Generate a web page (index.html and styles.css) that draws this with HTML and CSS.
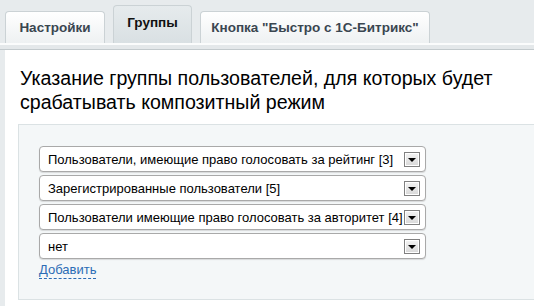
FILE: index.html
```html
<!DOCTYPE html>
<html lang="ru">
<head>
<meta charset="utf-8">
<link rel="stylesheet" href="styles.css">
</head>
<body>
<div class="tabs">
  <div class="tab tab-settings">Настройки</div>
  <div class="tab tab-groups active">Группы</div>
  <div class="tab tab-button">Кнопка "Быстро с 1С-Битрикс"</div>
</div>
<div class="tab-sep"></div>
<div class="panel">
  <h1 class="title">Указание группы пользователей, для которых будет срабатывать композитный режим</h1>
  <div class="box">
    <div class="select"><span class="val">Пользователи, имеющие право голосовать за рейтинг [3]</span><span class="btn"></span></div>
    <div class="select"><span class="val">Зарегистрированные пользователи [5]</span><span class="btn"></span></div>
    <div class="select"><span class="val">Пользователи имеющие право голосовать за авторитет [4]</span><span class="btn"></span></div>
    <div class="select"><span class="val">нет</span><span class="btn"></span></div>
    <a class="add" href="#">Добавить</a>
  </div>
</div>
</body>
</html>
```
FILE: styles.css
```css
html, body {
  margin: 0;
  padding: 0;
}
body {
  background: #e7ebed;
  font-family: "Liberation Sans", Arial, sans-serif;
  width: 534px;
  height: 306px;
  overflow: hidden;
}
.tabs {
  display: flex;
  align-items: flex-end;
  gap: 8px;
  padding: 5px 0 0 5px;
  height: 43px;
  box-sizing: border-box;
}
.tab {
  height: 32px;
  box-sizing: border-box;
  display: flex;
  align-items: center;
  justify-content: center;
  font-size: 13.5px;
  font-weight: bold;
  color: #3a4650;
  background: linear-gradient(#ffffff, #eef1f2);
  border: 1px solid #cbd2d5;
  border-bottom: none;
  border-radius: 4px 4px 0 0;
  white-space: nowrap;
}
.tab-settings { width: 100px; }
.tab-groups { width: 79px; }
.tab-button { width: 230px; }
.tab.active {
  height: 38px;
  color: #111;
  background: linear-gradient(#e6ebed, #d9e0e3);
  padding-bottom: 4px;
}
.tab-sep {
  height: 7px;
  box-sizing: border-box;
  border-top: 2px solid #fbfcfc;
  background: #e4e8ea;
  border-bottom: 1px solid #c3cacd;
}
.panel {
  margin-left: 5px;
  background: #fff;
  padding: 16px 0 0 13px;
  height: 256px;
  box-sizing: border-box;
}
.title {
  margin: 0 0 10px 2px;
  font-size: 19.6px;
  line-height: 24px;
  font-weight: normal;
  color: #000;
}
.box {
  background: #f4f7f8;
  border: 1px solid #dbe2e4;
  border-right: none;
  padding: 21px 0 20px 20px;
  display: flex;
  flex-direction: column;
  align-items: flex-start;
  gap: 3px;
}
.select {
  width: 387px;
  height: 26px;
  box-sizing: border-box;
  background: #fff;
  border: 1px solid #a9a9a9;
  border-radius: 4px;
  box-shadow: 0 1px 1px rgba(0, 0, 0, 0.12);
  display: flex;
  align-items: center;
  justify-content: space-between;
  padding: 0 5px 0 8px;
  font-size: 13px;
  color: #000;
}
.val {
  white-space: nowrap;
}
.btn {
  flex: none;
  width: 16px;
  height: 15px;
  box-sizing: border-box;
  border: 1px solid #808080;
  background: linear-gradient(#f4f4f4, #d8d8d8);
  box-shadow: inset 0 0 0 1px #fff;
  display: flex;
  align-items: center;
  justify-content: center;
}
.btn::after {
  content: "";
  width: 0;
  height: 0;
  border-left: 4px solid transparent;
  border-right: 4px solid transparent;
  border-top: 4px solid #000;
  margin-top: 1px;
}
.add {
  margin-top: 0;
  font-size: 13px;
  line-height: 16px;
  color: #2b6cb5;
  text-decoration: none;
  border-bottom: 1px dashed #2b6cb5;
}
```
